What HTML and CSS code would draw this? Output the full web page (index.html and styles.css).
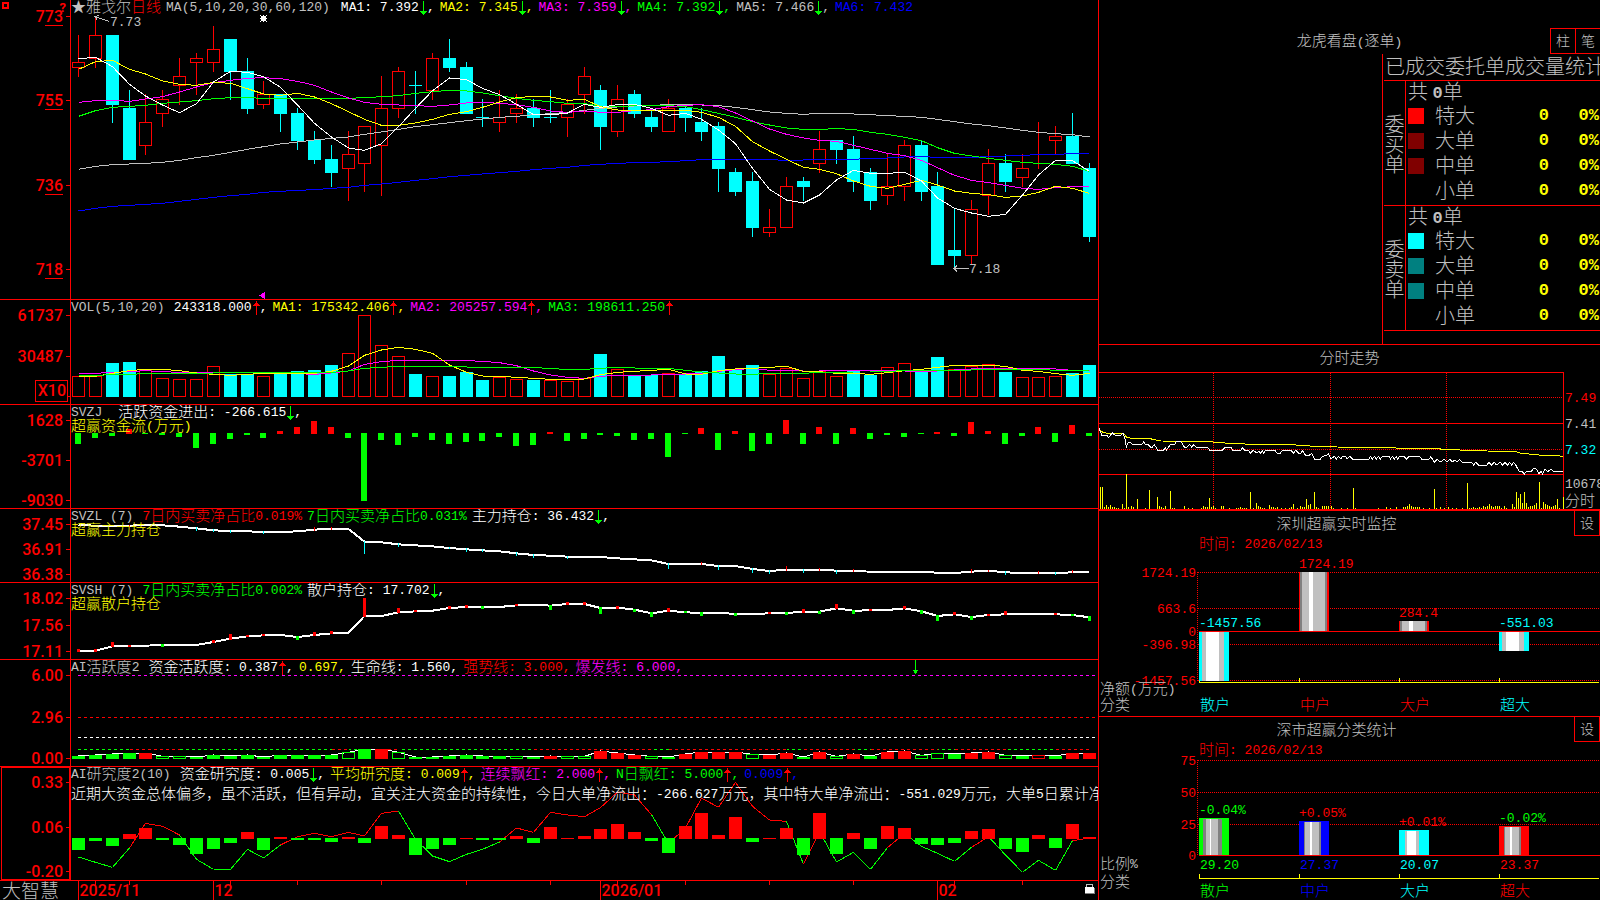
FILE: index.html
```html
<!DOCTYPE html>
<html lang="zh-CN">
<head>
<meta charset="utf-8">
<title>雅戈尔 日线</title>
<link rel="stylesheet" href="styles.css">
</head>
<body>
<svg class="defs" aria-hidden="true">
  <symbol id="dn" viewBox="0 0 8 16"><path d="M4.5 1V15M1 11h7M2 12h5M3 13h3"/></symbol>
  <symbol id="up" viewBox="0 0 8 16"><path d="M4.5 1V15M3 3h3M2 4h5M1 5h7"/></symbol>
</svg>
<main class="terminal">
  <div class="charts">

    <section class="panel">
      <div class="axis axis-price">
        <span class="winbox"></span><span class="help">?</span>
        <span class="lv">7<u>73</u></span><span class="lv">7<u>55</u></span><span class="lv">7<u>36</u></span><span class="lv">7<u>18</u></span>
      </div>
      <div class="plot" id="price">
        <header class="legend">
          <h1><span class="zh c-s">★雅戈尔</span><span class="zh c-r">日线</span></h1>
          <span class="c-s param">MA(5,10,20,30,60,120)</span>
          <span class="c-w">MA1: 7.392<svg class="ar c-g"><use href="#dn"/></svg>,</span>
          <span class="c-y">MA2: 7.345<svg class="ar c-g"><use href="#dn"/></svg>,</span>
          <span class="c-m">MA3: 7.359<svg class="ar c-g"><use href="#dn"/></svg>,</span>
          <span class="c-g">MA4: 7.392<svg class="ar c-g"><use href="#dn"/></svg>,</span>
          <span class="c-s">MA5: 7.466<svg class="ar c-g"><use href="#dn"/></svg>,</span>
          <span class="c-b">MA6: 7.432</span>
        </header>
      </div>
    </section>

    <section class="panel">
      <div class="axis">
        <span class="lv">61737</span><span class="lv">30487</span><span class="lv"></span>
        <span class="unit">X10</span>
      </div>
      <div class="plot" id="vol">
        <header class="legend">
          <span class="c-s lead">VOL(5,10,20)</span>
          <span class="c-w">243318.000<svg class="ar c-r"><use href="#up"/></svg>,</span>
          <span class="c-y">MA1: 175342.406<svg class="ar c-r"><use href="#up"/></svg>,</span>
          <span class="c-m">MA2: 205257.594<svg class="ar c-r"><use href="#up"/></svg>,</span>
          <span class="c-g">MA3: 198611.250<svg class="ar c-r"><use href="#up"/></svg></span>
        </header>
      </div>
    </section>

    <section class="panel">
      <div class="axis"><span class="lv">1628</span><span class="lv">-3701</span><span class="lv">-9030</span></div>
      <div class="plot" id="flow">
        <header class="legend">
          <span class="c-s wide">SVZJ</span>
          <span class="c-w"><span class="zh">活跃资金进出</span>: -266.615<svg class="ar c-g"><use href="#dn"/></svg>,</span>
        </header>
        <p class="sub c-y"><span class="zh">超赢资金流</span>(<span class="zh">万元</span>)</p>
      </div>
    </section>

    <section class="panel">
      <div class="axis"><span class="lv">37.45</span><span class="lv">36.91</span><span class="lv">36.38</span></div>
      <div class="plot" id="main">
        <header class="legend">
          <span class="c-s lead">SVZL (7)</span>
          <span class="c-r">7<span class="zh">日内买卖净占比</span>0.019%</span>
          <span class="c-g">7<span class="zh">日内买卖净占比</span>0.031%</span>
          <span class="c-w"><span class="zh">主力持仓</span>: 36.432<svg class="ar c-g"><use href="#dn"/></svg>,</span>
        </header>
        <p class="sub c-y"><span class="zh">超赢主力持仓</span></p>
      </div>
    </section>

    <section class="panel">
      <div class="axis"><span class="lv">18.02</span><span class="lv">17.56</span><span class="lv">17.11</span></div>
      <div class="plot" id="retail">
        <header class="legend">
          <span class="c-s lead">SVSH (7)</span>
          <span class="c-g">7<span class="zh">日内买卖净占比</span>0.002%</span>
          <span class="c-w"><span class="zh">散户持仓</span>: 17.702<svg class="ar c-g"><use href="#dn"/></svg>,</span>
        </header>
        <p class="sub c-y"><span class="zh">超赢散户持仓</span></p>
      </div>
    </section>

    <section class="panel">
      <div class="axis"><span class="lv">6.00</span><span class="lv">2.96</span><span class="lv">0.00</span></div>
      <div class="plot" id="active">
        <header class="legend">
          <span class="c-s lead">AI<span class="zh">活跃度</span>2</span>
          <span class="c-w"><span class="zh">资金活跃度</span>: 0.387<svg class="ar c-r"><use href="#up"/></svg>,</span>
          <span class="c-y">0.697,</span>
          <span class="c-w"><span class="zh">生命线</span>: 1.560,</span>
          <span class="c-r"><span class="zh">强势线</span>: 3.000,</span>
          <span class="c-m"><span class="zh">爆发线</span>: 6.000,</span>
        </header>
      </div>
    </section>

    <section class="panel">
      <div class="axis selected"><span class="lv">0.33</span><span class="lv">0.06</span><span class="lv">-0.20</span></div>
      <div class="plot" id="research">
        <header class="legend">
          <span class="c-s lead">AI<span class="zh">研究度</span>2(10)</span>
          <span class="c-w"><span class="zh">资金研究度</span>: 0.005<svg class="ar c-g"><use href="#dn"/></svg>,</span>
          <span class="c-y"><span class="zh">平均研究度</span>: 0.009<svg class="ar c-r"><use href="#up"/></svg>,</span>
          <span class="c-m"><span class="zh">连续飘红</span>: 2.000<svg class="ar c-r"><use href="#up"/></svg>,</span>
          <span class="c-g">N<span class="zh">日飘红</span>: 5.000<svg class="ar c-r"><use href="#up"/></svg>,</span>
          <span class="c-b">0.009<svg class="ar c-r"><use href="#up"/></svg>,</span>
        </header>
        <p class="comment c-w"><span class="zh">近期大资金总体偏多，虽不活跃，但有异动，宜关注大资金的持续性，今日大单净流出：</span>-266.627<span class="zh">万元，其中特大单净流出：</span>-551.029<span class="zh">万元，大单</span>5<span class="zh">日累计净流出</span></p>
      </div>
    </section>

    <footer class="panel timeline">
      <div class="brand">大智慧</div>
      <div class="plot" id="dates"></div>
    </footer>
  </div>

  <aside class="side">
    <section class="orders">
      <header class="orders-head">
        <h2>龙虎看盘<span class="lat">(</span>逐单<span class="lat">)</span></h2>
        <div class="tabs"><button type="button">柱</button><button type="button">笔</button></div>
      </header>
      <div class="orders-body">
        <div class="orders-blank"></div>
        <div class="orders-data">
          <h3 id="orders-title">已成交委托单成交量统计</h3>
          <table aria-labelledby="orders-title">
            <colgroup><col class="k-side"><col class="k-sw"><col class="k-name"><col class="k-num"><col class="k-pct"></colgroup>
            <tbody>
              <tr><th rowspan="5" scope="rowgroup" class="vside">委<br>买<br>单</th><td colspan="4" class="total">共 <b>0</b>单</td></tr>
              <tr><td><i class="sw big-buy"></i></td><th scope="row">特大</th><td class="n">0</td><td class="n">0%</td></tr>
              <tr><td><i class="sw buy"></i></td><th scope="row">大单</th><td class="n">0</td><td class="n">0%</td></tr>
              <tr><td><i class="sw buy"></i></td><th scope="row">中单</th><td class="n">0</td><td class="n">0%</td></tr>
              <tr><td></td><th scope="row">小单</th><td class="n">0</td><td class="n">0%</td></tr>
            </tbody>
            <tbody>
              <tr><th rowspan="5" scope="rowgroup" class="vside">委<br>卖<br>单</th><td colspan="4" class="total">共 <b>0</b>单</td></tr>
              <tr><td><i class="sw big-sell"></i></td><th scope="row">特大</th><td class="n">0</td><td class="n">0%</td></tr>
              <tr><td><i class="sw sell"></i></td><th scope="row">大单</th><td class="n">0</td><td class="n">0%</td></tr>
              <tr><td><i class="sw sell"></i></td><th scope="row">中单</th><td class="n">0</td><td class="n">0%</td></tr>
              <tr><td></td><th scope="row">小单</th><td class="n">0</td><td class="n">0%</td></tr>
            </tbody>
          </table>
        </div>
      </div>
    </section>

    <section class="plot" id="intraday">
      <header class="side-head only"><h2>分时走势</h2></header>
    </section>

    <section class="plot" id="monitor">
      <header class="side-head"><h2>深圳超赢实时监控</h2><button type="button">设</button></header>
    </section>

    <section class="plot" id="classes">
      <header class="side-head"><h2>深市超赢分类统计</h2><button type="button">设</button></header>
    </section>
  </aside>
</main>
<script src="charts.js"></script>
</body>
</html>
```

FILE: styles.css
```css
* { box-sizing: border-box; }

body {
  margin: 0;
  background: #000;
  color: #c0c0c0;
  font: 13px/16px "Liberation Mono", "Noto Sans CJK SC", monospace;
  overflow: hidden;
}

h1, h2, h3, p { margin: 0; font-weight: 300; }
h1, p { font-size: 13px; line-height: 16px; }

.defs { position: absolute; width: 0; height: 0; }
#dn path, #up path { stroke: currentColor; fill: none; shape-rendering: crispEdges; }

.zh, h2, button {
  font-family: "Noto Sans CJK SC", sans-serif;
  font-size: 15px;
  font-weight: 300;
}
.zh { line-height: 0; vertical-align: -1px; }

.c-w { color: #fff; }
.c-y { color: #ff0; }
.c-m { color: #f0f; }
.c-g { color: #0f0; }
.c-s { color: #c0c0c0; }
.c-b { color: #00f; }
.c-r { color: #f00; }
.c-c { color: #0ff; }

.terminal {
  display: grid;
  grid-template-columns: 1099fr 501fr;
  height: 100vh;
}

/* Left: stacked indicator panels */
.charts {
  display: grid;
  grid-template-rows: 300fr 105fr 104fr 74fr 77fr 107fr 114fr 19fr;
  min-width: 0;
  border-right: 1px solid #f00;
}
.panel {
  display: grid;
  grid-template-columns: 71px minmax(0, 1fr);
  min-height: 0;
  border-bottom: 1px solid #f00;
}
.axis {
  position: relative;
  display: flex;
  flex-direction: column;
  justify-content: space-between;
  padding-top: 7px;
  border-right: 1px solid #f00;
  color: #f00;
  font: 500 16px/18px Roboto, sans-serif;
  text-align: right;
}
.axis-price { padding: 8px 0 22px; }
.lv { position: relative; height: 16px; padding-right: 7px; }
.lv::after {
  content: "";
  position: absolute;
  right: 0;
  top: 8px;
  width: 4px;
  height: 1px;
  background: #f00;
}
.lv u { display: inline-block; height: 18px; text-decoration: none; border-bottom: 1px solid #f00; }
.unit {
  position: absolute;
  right: 2px;
  bottom: 2px;
  padding: 1px 1px 1px 2px;
  border: 1px solid #f00;
  background: #000;
}
.selected { margin-left: 1px; border: 1px solid #f00; padding-top: 6px; box-shadow: inset -1px 0 #f00; }
.winbox { position: absolute; left: 2px; top: 2px; width: 7px; height: 7px; border: 2px solid #f00; }
.help { position: absolute; right: 4px; top: 1px; font-weight: 700; font-size: 13px; line-height: 14px; }

.plot { position: relative; min-width: 0; min-height: 0; overflow: hidden; }
.canvas {
  position: absolute;
  inset: 0;
  width: 100%;
  height: 100%;
  shape-rendering: crispEdges;
}
.canvas * { vector-effect: non-scaling-stroke; }
.legend {
  position: relative;
  z-index: 1;
  display: flex;
  gap: 5px;
  height: 16px;
  white-space: pre;
}
.lead { margin-right: 4px; }
.wide { margin-right: 11px; }
.param { margin-right: 6px; }
.ar { width: 8px; height: 16px; margin: -2px 0; vertical-align: middle; }
.sub, .comment { position: relative; z-index: 1; white-space: nowrap; }
.sub { margin-top: -2px; }
.comment { margin-top: 4px; }
.mark {
  position: absolute;
  z-index: 1;
  white-space: pre;
  padding-top: 2px;
  transform: translateY(-50%);
}
.mark.end { transform: translate(-100%, -50%); }
.date { font: 500 16px/16px Roboto, sans-serif; }

.timeline { border-bottom: 0; }
.brand {
  padding-left: 2px;
  font: 300 19px/18px "Noto Sans CJK SC", sans-serif;
}

/* Right column */
.side {
  display: grid;
  grid-template-rows: 345fr 166fr 206fr 183fr;
  min-width: 0;
}
.side > section { min-height: 0; min-width: 0; overflow: hidden; border-bottom: 1px solid #f00; }
.side > #intraday { border-bottom-width: 2px; }
.side > #classes { border-bottom: 0; }

button {
  width: 26px;
  padding: 0 0 2px;
  border: 1px solid #f00;
  background: #000;
  color: #c0c0c0;
  font-size: 14px;
  line-height: 16px;
}
.orders { display: flex; flex-direction: column; }
.orders-head {
  display: grid;
  grid-template-columns: 1fr auto;
  align-items: center;
  height: 54px;
  padding-top: 28px;
}
.orders-head h2 { grid-area: 1 / 1 / 2 / 3; text-align: center; line-height: 16px; }
.lat { font: 13px/16px "Liberation Mono", monospace; }
.tabs { grid-area: 1 / 2; display: flex; height: 26px; margin-right: -1px; }
.tabs button + button { margin-left: -1px; }
.orders-body { flex: 1; display: grid; grid-template-columns: 283fr 218fr; }
.orders-data { min-width: 0; overflow: hidden; border-left: 1px solid #f00; padding-left: 1px; }
.orders h3, .orders table { font: 300 20px/18px "Noto Sans CJK SC", sans-serif; }
.orders h3 {
  height: 27px;
  padding-left: 1px;
  border-bottom: 1px solid #f00;
  line-height: 23px;
  white-space: nowrap;
}
.orders table {
  width: 100%;
  table-layout: fixed;
  border-collapse: separate;
  border-spacing: 0;
}
.orders tr { height: 25px; }
.orders td, .orders th {
  padding: 0;
  font-weight: 300;
  text-align: left;
  vertical-align: top;
  white-space: nowrap;
}
.orders tbody tr:last-child > *, .orders .vside { box-shadow: inset 0 -1px #f00; }
.orders .vside {
  border-right: 1px solid #f00;
  line-height: 20px;
  text-align: center;
  vertical-align: middle;
}
.orders .total { padding-left: 2px; line-height: 20px; }
.total b, .orders .n { font: 700 17px/20px "Liberation Mono", monospace; }
.total b { line-height: 18px; vertical-align: 1px; }
.orders .n { color: #ff0; text-align: right; padding-right: 1px; }
.orders tr > th[scope="row"] { padding-left: 2px; }
.k-side { width: 22px; }
.k-sw { width: 27px; }
.k-name { width: 60px; }
.k-num { width: 57px; }
.sw { display: block; width: 16px; height: 16px; margin: 2px 0 0 2px; }
.big-buy { background: #f00; }
.buy { background: #800000; }
.big-sell { background: #0ff; }
.sell { background: #008080; }

.side-head {
  position: relative;
  z-index: 1;
  display: grid;
  grid-template-columns: 1fr 26px;
  height: 25px;
}
.side-head h2 { text-align: center; line-height: 23px; }
.side-head button { border-top: 0; }
.only { grid-template-columns: 1fr; }
```

FILE: charts.js
```js
const NS = "http://www.w3.org/2000/svg";
const R = "#f00", G = "#0f0", C = "#0ff", W = "#fff", Y = "#ff0", M = "#f0f", S = "#c0c0c0", B = "#00f", D = "#808080";
const N = 61;
const cx = i => Math.floor(78.5 + 16.85 * i) + 0.5;

/* A drawing surface stretched over a panel; x, y, w, h are its user units. */
function surface(id, x, y, w, h) {
  const host = document.getElementById(id);
  const svg = document.createElementNS(NS, "svg");
  svg.setAttribute("class", "canvas");
  svg.setAttribute("viewBox", [x, y, w, h].join(" "));
  svg.setAttribute("preserveAspectRatio", "none");
  host.prepend(svg);
  const add = (tag, attrs) => {
    const e = document.createElementNS(NS, tag);
    for (const k in attrs) e.setAttribute(k, attrs[k]);
    svg.append(e);
    return e;
  };
  return {
    rect: (rx, ry, rw, rh, fill) => add("rect", { x: rx, y: ry, width: rw, height: Math.max(rh, 1), fill }),
    box: (rx, ry, rw, rh, stroke) => add("rect", { x: rx + 0.5, y: ry + 0.5, width: rw - 1, height: Math.max(rh - 1, 1), fill: "none", stroke }),
    line: (pts, stroke, width = 1, dash) => {
      const a = { points: pts.map(p => p.join(",")).join(" "), fill: "none", stroke, "stroke-width": width };
      if (dash) a["stroke-dasharray"] = dash;
      return add("polyline", a);
    },
    path: (d, fill, stroke = "none") => add("path", { d, fill, stroke }),
    mark: (mx, my, text, cls, end) => {
      const s = document.createElement("span");
      s.className = "mark " + cls + (end ? " end" : "");
      s.innerHTML = text.replace(/[\u4e00-\u9fff]+/g, '<span class="zh">$&</span>');
      s.style.left = (mx - x) / w * 100 + "%";
      s.style.top = (my - y) / h * 100 + "%";
      host.append(s);
    }
  };
}
/* Series are sampled at three units per pixel from a base row. */
const series = (vals, base) => vals.map((v, i) => [cx(i), base + v / 3]);

/* Daily candles: colour, high, body top, body bottom, low */
const candles = `R35,62,68,77 R16,35,59,68 C35,35,105,123 C90,108,160,160 R94,122,146,155 R90,99,114,127 R58,76,86,105 R53,58,63,95
R26,49,63,72 C39,39,72,100 C58,71,109,114 R81,94,105,109 C94,94,114,132 C108,113,141,150 C131,140,160,164 C145,159,173,187
R131,154,169,201 R126,126,164,192 R76,108,146,196 R67,71,109,118 C71,85,86,114 R53,58,91,100 C39,58,68,72 C62,67,114,114
C99,117,118,127 R90,117,123,132 R94,108,114,123 C99,108,118,127 C90,117,118,123 R99,104,118,137 R67,76,95,114 C85,90,127,150
R85,99,132,137 C90,94,114,118 C111,117,127,132 R99,108,132,132 C106,108,118,132 C108,122,132,141 C122,126,169,192 C168,172,192,196
C172,181,228,237 R209,227,233,237 R177,186,228,228 C177,181,187,201 R131,149,164,173 C140,140,150,164 C136,149,182,192 C168,172,201,210
R153,186,196,205 R140,145,187,201 C140,145,192,201 C172,186,265,265 C209,250,256,268 R200,209,256,265 R149,163,196,215 C154,163,182,192
R154,168,178,187 R122,150,150,169 R126,136,141,154 C113,136,164,164 C163,168,237,242`.split(/\s+/);

const ma = {
  [B]: [633,625,619,616,613,610,604,598,592,587,583,577,574,571,569,565,562,556,552,547,541,536,530,526,522,518,514,509,505,502,496,493,490,488,487,485,482,479,478,478,478,479,481,480,479,478,478,475,474,471,470,472,472,472,470,468,466,464,463,461,460],
  [S]: [508,499,494,492,490,487,481,473,466,457,448,440,432,426,420,415,411,403,396,388,380,374,368,362,357,352,349,344,341,337,331,325,321,318,316,314,314,315,317,322,329,336,340,343,340,340,342,344,347,349,352,358,365,372,377,384,391,397,401,404,411],
  [G]: [349,332,322,319,316,310,306,302,296,293,293,295,295,295,295,295,295,293,290,287,280,275,271,273,279,287,295,301,305,310,311,319,320,317,316,317,320,329,340,352,365,375,384,388,388,386,388,397,403,412,422,443,460,468,475,481,487,490,493,499,514],
  [M]: [307,302,301,304,297,290,276,261,248,241,235,233,236,244,256,276,294,307,313,315,317,319,315,309,307,310,314,322,333,337,333,337,337,332,329,320,316,314,320,339,363,387,403,414,421,424,436,448,460,467,481,503,526,541,548,556,565,568,563,560,559],
  [Y]: [208,185,181,208,222,243,253,256,247,250,266,282,286,280,291,311,335,358,376,376,369,358,343,335,322,306,293,289,291,301,298,320,330,331,331,331,331,337,352,379,425,453,478,502,508,521,543,559,565,553,541,555,573,580,584,592,588,577,559,565,580],
  [W]: [176,172,200,253,288,315,338,311,246,214,217,230,262,315,370,411,444,451,431,380,325,272,234,239,265,284,313,344,345,339,313,322,314,313,325,346,340,358,390,431,505,568,600,609,585,540,511,520,520,517,543,594,625,639,649,643,585,525,481,482,514]
};

const price = surface("price", 71, 0, 1027, 299);
candles.forEach((c, i) => {
  const col = c[0] === "R" ? R : C;
  const [hi, top, bot, lo] = c.slice(1).split(",").map(Number);
  const x = cx(i) - 0.5;
  if (top > hi) price.rect(x, hi, 1, top - hi, col);
  if (lo > bot) price.rect(x, bot, 1, lo - bot, col);
  if (col === C) price.rect(x - 6, top, 13, bot - top, C);
  else if (top === bot) price.rect(x, hi, 1, lo - hi, R);
  else price.box(x - 6, top, 13, bot - top, R);
});
for (const col in ma) price.line(series(ma[col], 0), col);
price.line([[109, 21.5], [95, 16.5]], S);
price.line([[97, 19.5], [95, 16.5], [99, 15.5]], S);
price.line([[969, 268.5], [954, 268.5]], S);
price.line([[957, 265.5], [954, 268.5], [957, 271.5]], S);
price.mark(110, 22, "7.73", "c-s");
price.mark(969, 269, "7.18", "c-s");
price.path("M261 16h5v5h-5zM260 15h1v1h-1zM266 15h1v1h-1zM260 21h1v1h-1zM266 21h1v1h-1zM263 15h1v7h-1zM260 18h7v1h-7z", W);
price.path("M259 295.5L265 292V299Z", M);

const volumes = "R244 R244 C204 C201 R226 R250 R253 R253 R214 C237 C238 R244 C235 C228 C225 C210 R175 R61 R151 R184 C237 R244 C243 C231 C255 R245 R253 C255 R255 R259 R250 C177 R223 C240 C241 R235 C238 C228 C183 C225 C210 R238 R220 R250 R229 R244 C228 C240 R217 R205 C231 C186 R223 R214 R208 C231 R247 R247 R244 C234 C210".split(" ");
const vol = surface("vol", 71, 300, 1027, 104);
volumes.forEach((v, i) => {
  const top = Math.round(295 + v.slice(1) / 3), x = cx(i) - 6.5;
  if (v[0] === "C") vol.rect(x, top, 13, 397 - top, C);
  else vol.box(x, top, 13, 397 - top, R);
});
vol.line(series([235,235,232,230,227,230,232,233,234,233,232,233,234,236,238,234,228,208,200,196,196,196,196,197,199,203,212,228,240,247,250,244,241,241,240,238,237,235,229,224,220,226,227,228,228,226,226,226,227,228,229,228,225,222,221,220,220,220,222,226,226], 295), M);
vol.line(series([244,244,235,227,223,223,227,234,238,241,238,235,236,236,235,229,213,181,165,157,163,175,210,232,243,244,247,250,253,253,252,239,232,229,226,223,237,238,227,222,220,217,214,229,230,235,235,238,233,227,223,217,211,211,211,214,226,229,236,241,235], 295), Y);
vol.line(series([241,241,239,238,236,235,235,235,234,233,233,233,233,233,233,232,228,220,217,214,214,214,214,216,219,217,217,217,221,223,223,220,217,219,220,220,226,231,234,237,238,235,235,235,232,232,231,231,229,227,226,226,226,225,223,223,223,223,226,226,227], 295), G);

const flow = surface("flow", 71, 405, 1027, 103);
[447,430,423,402,416,419,426,459,447,432,420,430,408,396,378,396,430,618,435,450,426,435,447,441,438,426,453,450,411,438,432,420,423,435,432,486,417,399,465,408,468,447,375,447,396,447,399,432,420,426,417,411,423,381,408,447,423,396,441,390,423].forEach((v, i) => {
  const end = Math.round(295 + v / 3), x = cx(i) - 3.5;
  if (v < 413) flow.rect(x, end, 6, 434 - end, R);
  else flow.rect(x, 433, 6, end - 433, G);
});

function holding(id, y, h, vals, ticks, width, down) {
  const s = surface(id, 71, y, 1027, h);
  const pts = series(vals, 505);
  s.line(pts, W, 2);
  for (const i in ticks) {
    const len = ticks[i] / 3, py = Math.round(pts[i][1]);
    const x = Math.floor(cx(i) - width / 2);
    if (len < 0) s.rect(x, py + Math.round(len), width, 1 - Math.round(len), R);
    else s.rect(x, py - 1, width, Math.round(len) + 1, down);
  }
}
holding("main", 509, 73,
  [60,62,63,62,60,61,65,70,76,78,79,81,81,79,74,71,72,110,112,118,121,124,129,133,136,139,145,150,152,155,156,156,160,163,166,177,177,177,183,183,192,198,194,194,194,197,198,200,201,201,201,203,204,200,197,202,204,204,204,202,201],
  {3:-4,7:10,8:6,9:5,11:6,14:-8,15:-5,17:36,19:8,22:4,23:8,24:6,26:8,27:9,29:6,35:14,37:-6,38:11,40:11,41:9,42:-11,43:9,44:-5,45:9,46:-5,53:-8,54:-4,55:8,57:-5,58:5,59:-7}, 1, C);
holding("retail", 583, 76,
  [438,437,424,423,422,420,420,420,411,401,394,391,390,396,390,385,383,333,333,322,319,317,309,306,306,306,301,299,302,297,297,309,308,314,325,317,322,324,323,327,327,325,324,320,320,310,317,316,315,310,319,333,328,336,330,328,326,327,328,330,337],
  {0:-6,1:-5,2:-13,3:-4,5:6,8:-6,9:-14,10:-4,11:-4,13:8,14:-9,15:-7,17:-54,19:-13,20:-4,22:-6,23:-7,24:6,26:-4,28:13,29:-6,30:-6,31:18,32:-5,33:7,34:11,35:-8,36:4,37:9,39:6,41:-4,42:6,43:-8,44:7,45:-13,46:10,47:-4,49:-5,50:10,51:15,52:-5,53:9,54:-4,55:-8,58:-4,59:4,60:11}, 3, G);

const active = surface("active", 71, 660, 1027, 106);
[[675.5, M], [717.5, R], [737.5, W]].forEach(([y, c]) => active.line([[78, y], [1096, y]], c, 1, "3 3"));
const redSpans = [[3, 6], [15, 16], [18, 19], [27, 34], [35, 42], [43, 46], [47, 51], [52, 55], [58, 60]];
active.line([[78, 749.5], [1089, 749.5]], G, 1, "3 3");
redSpans.forEach(([a, b]) => {
  active.rect(cx(a), 749, cx(b) - cx(a), 1, "#000");
  active.line([[cx(a), 749.5], [cx(b), 749.5]], R, 1, "3 3");
});
const act = "G303 G300 G297 G294 R294 g304 g304 G306 G300 G303 G300 G306 G300 G300 G300 G300 g292 G282 R282 g292 G306 G306 G303 G300 G303 G303 g304 G306 R303 g304 g304 R288 R294 R300 g304 G306 R297 R291 R291 R291 g298 R300 R294 G306 R291 g304 R297 G303 R291 R288 g301 g295 G297 R294 R291 g301 G303 r301 G303 R294 R294".split(" ");
active.line(series(act.map(v => +v.slice(1)), 655), W);
act.forEach((v, i) => {
  const top = Math.round(655 + v.slice(1) / 3), x = cx(i) - 6.5;
  const col = v[0].toLowerCase() === "g" ? G : R;
  if (v[0] < "a") active.rect(x, top, 13, 759 - top, col);
  else active.box(x, top, 13, 759 - top, col);
});
active.line([[915.5, 660], [915.5, 674]], G);
active.path("M913 670h5v1h-5zM914 671h3v2h-3z", G);

const research = surface("research", 71, 767, 1027, 113);
const trend = series([606,622,637,579,505,514,540,613,643,643,583,609,570,545,535,545,532,543,475,468,553,603,620,598,583,561,519,532,472,480,485,458,411,420,479,565,519,429,457,382,454,495,499,628,530,621,592,643,578,535,574,595,619,577,545,600,652,616,646,557,549], 655);
const rising = new Set([3,4,5,12,13,14,15,16,17,18,25,26,27,28,29,30,31,32,33,35,36,37,38,39,40,41,43,48,53,59]);
for (let i = 0; i < N - 1; i++) research.line([trend[i], trend[i + 1]], rising.has(i) ? R : G);
[585,558,573,537,519,555,570,597,582,564,531,585,546,555,555,561,546,564,513,540,600,582,570,549,555,555,543,564,516,549,543,522,507,531,558,594,513,474,540,486,561,549,519,600,474,597,534,582,513,519,567,570,564,528,522,582,591,540,579,507,546].forEach((v, i) => {
  const end = Math.round(655 + v / 3), x = cx(i) - 6.5;
  if (i !== 23 && v < 551) research.rect(x, end, 13, 839 - end, R);
  else if (i === 23) research.rect(x, 838, 13, 1, R);
  else research.rect(x, 838, 13, end - 838, G);
});

const dates = surface("dates", 71, 881, 1027, 19);
[1, 3, 9, 13, 18, 23, 28, 32, 36, 41, 46, 52, 56].forEach(i => dates.rect(cx(i) - 0.5, 881, 1, 4, R));
[[0, "2025/11"], [8, "12"], [31, "2026/01"], [51, "02"]].forEach(([i, t]) => {
  dates.rect(cx(i) - 0.5, 881, 1, 19, R);
  dates.mark(cx(i) + 1, 890, t, "date c-r");
});
dates.path("M1086 887V884h6V887", "none", S);
dates.rect(1085, 887, 9, 6, W);
dates.rect(1085, 893, 10, 1, D);
dates.rect(1094, 888, 1, 6, D);

/* Intraday */
const day = surface("intraday", 1099, 345, 501, 164);
const q = ([x, y]) => [1095 + x / 3, 340 + y / 3];
const pairs = t => t.trim().split(/\s+/).map(p => p.split(",").map(Number));
day.line([[1099, 372.5], [1563.5, 372.5], [1563.5, 509]], R);
[423.5, 474.5].forEach(y => day.line([[1099, y], [1563, y]], R));
[397.5, 449.5].forEach(y => day.line([[1099, y], [1563, y]], R, 1, "1 1"));
[1213.5, 1330.5, 1446.5].forEach(x => day.line([[x, 373], [x, 509]], R, 1, "1 1"));
pairs(`16,441 22,441 28,501 34,495 40,501 46,495 52,501 58,501 64,504 70,504 82,492 88,503 94,402 100,501 109,498 115,501 127,477 151,504 163,450
187,471 193,498 199,501 205,504 211,498 226,453 232,503 238,503 268,498 280,504 292,504 319,504 325,498 331,501 337,501 343,474 349,501 355,498
361,504 379,498 385,498 403,504 424,503 430,503 436,501 442,503 448,503 454,503 466,456 475,504 484,489 490,498 496,501 502,503 508,504 523,495
529,501 535,501 541,503 547,501 559,504 571,504 583,503 589,501 595,492 607,503 616,498 622,501 628,501 634,477 640,495 646,492 658,456 664,501
670,503 682,498 688,498 694,498 700,498 709,498 715,504 739,504 757,504 775,444 781,503 850,504 874,501 886,503 904,501 925,501 931,501 937,498
943,492 949,498 955,501 961,501 967,501 973,501 985,504 1003,504 1018,447 1024,503 1036,501 1048,504 1060,501 1072,504 1084,504 1102,504
1117,429 1123,503 1129,503 1135,501 1141,503 1147,503 1153,501 1159,503 1165,498 1171,501 1177,498 1183,492 1189,498 1195,501 1201,498
1207,498 1213,498 1219,504 1228,498 1234,503 1252,492 1258,501 1264,456 1270,474 1276,462 1282,489 1288,456 1294,489 1300,501 1306,498
1312,498 1318,495 1324,489 1333,426 1339,504 1345,486 1351,492 1357,495 1363,498 1369,501 1375,498 1381,495 1387,477 1393,503 1405,471`)
  .forEach(([x, y]) => { const t = Math.round(340 + y / 3); day.rect(Math.floor(1095 + x / 3), t, 1, 509 - t, Y); });
day.line(pairs("12,268 24,277 36,280 86,280 94,291 108,295 160,295 198,303 328,304 390,309 470,313 590,314 658,319 726,321 842,323 1016,326 1116,331 1176,333 1262,335 1274,339 1332,345 1386,347 1404,349").map(q), Y);
day.line(pairs(`12,265 20,285 35,285 40,293 52,279 60,285 78,285 84,279 90,297 94,320 100,306 106,306 112,314 140,314 146,306 152,314 160,314
166,321 172,321 178,314 188,330 206,330 212,322 214,330 226,314 240,313 244,305 258,305 268,321 276,321 284,313 290,321 296,314 302,321
338,322 344,330 382,330 390,322 408,322 412,330 438,330 443,322 448,330 460,330 466,339 474,331 486,339 492,333 496,339 502,333 506,339
512,331 540,331 546,339 556,339 562,331 588,331 596,339 602,331 610,339 618,339 622,331 632,347 640,348 650,340 658,357 676,357 682,349
694,347 700,340 708,357 718,349 724,357 730,349 738,357 742,349 752,349 756,357 764,349 772,357 822,357 826,349 832,357 838,349 844,357
850,349 856,357 862,349 882,349 886,357 892,349 898,357 904,349 908,357 914,349 926,349 934,357 942,349 974,349 980,357 1002,357 1008,350
1018,367 1026,358 1036,366 1048,358 1056,366 1064,358 1072,366 1080,360 1086,366 1094,358 1102,367 1130,367 1136,375 1142,367 1150,375
1176,375 1182,367 1190,375 1198,367 1204,375 1216,367 1222,375 1230,367 1238,375 1244,367 1250,375 1256,367 1262,375 1272,393 1280,393
1288,402 1296,393 1310,393 1316,385 1324,387 1332,402 1338,393 1342,402 1350,387 1358,395 1368,387 1376,394 1404,394`).map(q), W);
day.mark(1565, 398, "7.49", "c-r");
day.mark(1565, 424, "7.41", "c-s");
day.mark(1565, 450, "7.32", "c-c");
day.mark(1565, 484, "10678", "c-s");
day.mark(1565, 501, "分时", "c-s");

/* Cylinder-shaded column: bands are [width, colour] from left to right */
function column(s, x, top, bottom, bands) {
  bands.forEach(([w, c]) => { s.rect(x, top, w, bottom - top, c); x += w; });
}
const cols = [1199, 1299, 1399, 1499];
const tint = { "c-c": C, "c-r": R, "c-g": G, "c-b": B };
function frame(s, dotted, zero, base, axisTop, axisBottom) {
  dotted.forEach(y => s.line([[1198, y + 0.5], [1600, y + 0.5]], R, 1, "1 1"));
  s.line([[1197.5, axisTop], [1197.5, axisBottom]], R, 1, "1 1");
  s.rect(1199, zero, 401, 1, R);
  s.rect(1199, base, 400, 1, Y);
  cols.forEach(x => s.rect(x, base - 4, 1, 4, Y));
}

const mon = surface("monitor", 1099, 511, 501, 205);
frame(mon, [572, 608, 644, 680], 631, 682, 572, 681);
const down = [[3, C], [4, S], [13, W], [5, S], [5, C]];
const up = [[1, R], [2, D], [7, S], [4, W], [12, S], [2, D], [2, R]];
column(mon, 1199, 632, 681, down);
column(mon, 1299, 572, 631, up);
column(mon, 1399, 621, 631, up);
column(mon, 1499, 632, 651, down);
mon.mark(1199, 544, "时间: 2026/02/13", "c-r");
[[573, "1724.19"], [609, "663.6"], [632, "0"], [645, "-396.98"], [681, "-1457.56"]].forEach(([y, t]) => mon.mark(1196, y, t, "c-r", true));
[[1199, 623, "-1457.56", "c-c"], [1299, 564, "1724.19", "c-r"], [1399, 613, "284.4", "c-r"], [1499, 623, "-551.03", "c-c"]].forEach(a => mon.mark(...a));
["散户", "中户", "大户", "超大"].forEach((t, i) => mon.mark(cols[i] + 1, 705, t, ["c-c", "c-r", "c-r", "c-c"][i]));
mon.mark(1100, 689, "净额(万元)", "c-s");
mon.mark(1100, 705, "分类", "c-s");

const cls = surface("classes", 1099, 717, 501, 183);
frame(cls, [760, 792, 824], 855, 878, 760, 856);
const kinds = [
  ["散户", "c-g", "29.20", 818, "-0.04%", "c-g", 810, [4, 3, 4, 1, 7, 4, 7]],
  ["中户", "c-b", "27.37", 821, "+0.05%", "c-r", 813, [5, 1, 5, 2, 7, 2, 8]],
  ["大户", "c-c", "20.07", 830, "+0.01%", "c-r", 822, [6, 0, 2, 9, 3, 0, 10]],
  ["超大", "c-r", "23.37", 826, "-0.02%", "c-g", 818, [5, 1, 5, 2, 7, 2, 8]]
];
kinds.forEach(([name, c, val, top, chg, chgCls, chgY, w], i) => {
  const fills = [tint[c], D, S, W, S, D, tint[c]];
  column(cls, cols[i], top, 855, w.map((n, k) => [n, fills[k]]).filter(b => b[0]));
  cls.rect(cols[i], top, 30, 1, tint[c]);
  cls.mark(cols[i], chgY, chg, chgCls);
  cls.mark(cols[i] + 1, 865, val, c);
  cls.mark(cols[i] + 1, 891, name, c);
});
cls.mark(1199, 750, "时间: 2026/02/13", "c-r");
[[761, "75"], [793, "50"], [825, "25"], [856, "0"]].forEach(([y, t]) => cls.mark(1196, y, t, "c-r", true));
cls.mark(1100, 864, "比例%", "c-s");
cls.mark(1100, 882, "分类", "c-s");
```
